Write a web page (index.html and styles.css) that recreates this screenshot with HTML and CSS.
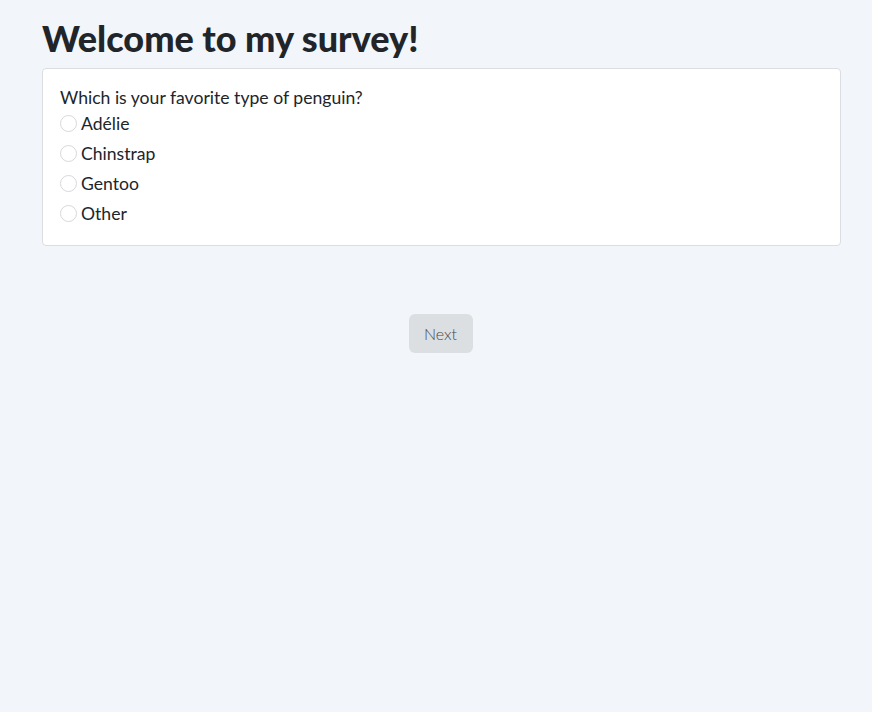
FILE: index.html
```html
<!DOCTYPE html>
<html lang="en">
<head>
<meta charset="utf-8">
<title>Survey</title>
<link rel="stylesheet" href="styles.css">
</head>
<body>
<main class="page">
  <h1 class="title">Welcome to my survey!</h1>
  <section class="card">
    <p class="question">Which is your favorite type of penguin?</p>
    <label class="option"><input type="radio" name="penguin"><span class="radio"></span><span>Adélie</span></label>
    <label class="option"><input type="radio" name="penguin"><span class="radio"></span><span>Chinstrap</span></label>
    <label class="option"><input type="radio" name="penguin"><span class="radio"></span><span>Gentoo</span></label>
    <label class="option"><input type="radio" name="penguin"><span class="radio"></span><span>Other</span></label>
  </section>
  <div class="actions">
    <button class="next" type="button">Next</button>
  </div>
</main>
</body>
</html>
```
FILE: styles.css
```css
html, body {
  margin: 0;
  padding: 0;
  height: 100%;
}
body {
  background: #f2f5fa;
  font-family: "Lato", "Open Sans", sans-serif;
  color: #212529;
}
.page {
  padding: 16px 31px 0 42px;
  display: flex;
  flex-direction: column;
}
.title {
  margin: 0 0 8px;
  font-size: 36px;
  font-weight: 900;
  line-height: 44px;
  color: #212529;
}
.card {
  background: #fff;
  border: 1px solid #dadde1;
  border-radius: 4px;
  padding: 19px 17px 17px;
  display: flex;
  flex-direction: column;
}
.question {
  margin: 0;
  font-size: 17.6px;
  line-height: 20px;
}
.option {
  display: flex;
  align-items: center;
  gap: 4px;
  height: 30px;
  font-size: 17.6px;
}
.option input {
  display: none;
}
.radio {
  width: 15px;
  height: 15px;
  border: 1px solid #d6d8db;
  border-radius: 50%;
  background: #fff;
  flex: none;
}
.actions {
  display: flex;
  justify-content: center;
  padding: 68px 2px 0 0;
}
.next {
  width: 64px;
  height: 39px;
  border: none;
  border-radius: 6px;
  background: #dcdfe2;
  color: #45484c;
  font-family: "Lato", sans-serif;
  font-size: 16px;
  font-weight: 300;
}
```
